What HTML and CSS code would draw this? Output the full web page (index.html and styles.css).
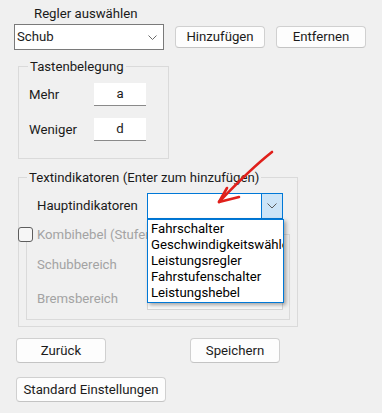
FILE: index.html
```html
<!DOCTYPE html>
<html lang="de">
<head>
<meta charset="utf-8">
<title>Regler</title>
<link rel="stylesheet" href="styles.css">
</head>
<body>
<div class="page">
  <div class="title">Regler auswählen</div>
  <div class="toprow">
    <div class="combo">
      <span class="combo-text">Schub</span>
      <svg class="chev" width="9" height="5" viewBox="0 0 9 5"><path d="M0.5 0.5 L4.5 4.5 L8.5 0.5" fill="none" stroke="#6a6a6a" stroke-width="1"/></svg>
    </div>
    <button class="btn btn-top">Hinzufügen</button>
    <button class="btn btn-top">Entfernen</button>
  </div>

  <fieldset class="grp grp-keys">
    <legend>Tastenbelegung</legend>
    <div class="keyrow"><span class="lbl lbl-key">Mehr</span><span class="keybox">a</span></div>
    <div class="keyrow keyrow-2"><span class="lbl lbl-key">Weniger</span><span class="keybox">d</span></div>
  </fieldset>

  <fieldset class="grp grp-text">
    <legend class="legend-text">Textindikatoren (Enter zum hinzufügen)</legend>
    <div class="hrow">
      <span class="lbl lbl-wide">Hauptindikatoren</span>
      <div class="combo combo-focus">
        <span class="combo-text"></span>
        <span class="dd-btn">
          <svg width="10" height="6" viewBox="0 0 10 6"><path d="M0.5 0.5 L5 5 L9.5 0.5" fill="none" stroke="#5a5a5a" stroke-width="1"/></svg>
        </span>
        <ul class="dd-list">
          <li>Fahrschalter</li>
          <li>Geschwindigkeitswähler</li>
          <li>Leistungsregler</li>
          <li>Fahrstufenschalter</li>
          <li>Leistungshebel</li>
        </ul>
      </div>
    </div>
    <fieldset class="grp grp-inner">
      <legend class="legend-check"><span class="check"></span><span class="dis">Kombihebel (Stufenschalter)</span></legend>
      <div class="irow"><span class="lbl lbl-wide dis">Schubbereich</span><span class="tbox-dis"></span></div>
      <div class="irow"><span class="lbl lbl-wide dis">Bremsbereich</span><span class="tbox-dis"></span></div>
    </fieldset>
  </fieldset>

  <div class="btnrow">
    <button class="btn btn-bottom">Zurück</button>
    <button class="btn btn-bottom btn-save">Speichern</button>
  </div>
  <div class="btnrow btnrow-2">
    <button class="btn btn-std">Standard Einstellungen</button>
  </div>

  <svg class="arrow" width="382" height="413" viewBox="0 0 382 413">
    <path d="M272 152 C 258 163, 238 182, 219 202" fill="none" stroke="#e0201b" stroke-width="2.6" stroke-linecap="round"/>
    <path d="M227 188 L 219 202 L 239 197" fill="none" stroke="#e0201b" stroke-width="2.6" stroke-linecap="round" stroke-linejoin="round"/>
  </svg>
</div>
</body>
</html>
```

FILE: styles.css
```css
* { box-sizing: border-box; }
html, body { margin: 0; padding: 0; background: #f0f0f0; }
body {
  font-family: Roboto, "Noto Sans", "DejaVu Sans", sans-serif;
  font-size: 13.2px;
  line-height: 16px;
  color: #1a1a1a;
  width: 382px;
  height: 413px;
  overflow: hidden;
}
.page { position: relative; height: 413px; }

.title { height: 22px; padding: 6px 0 0 34px; }

.toprow {
  display: flex;
  align-items: center;
  height: 26px;
  margin-top: 2px;
  padding-left: 14px;
}
.combo {
  position: relative;
  display: flex;
  align-items: center;
  width: 150px;
  height: 26px;
  background: #fff;
  border: 1px solid #7a7a7a;
}
.combo-text { padding-left: 2px; flex: 1; }
.chev { margin-right: 6px; margin-top: 1px; }

.btn {
  font: inherit;
  color: #1b1b1b;
  background: #fdfdfd;
  border: 1px solid #d0d0d0;
  border-bottom-color: #c4c4c4;
  border-radius: 4px;
  padding: 0;
  text-align: center;
}
.btn-top { width: 90px; height: 22px; margin-left: 11px; }

.grp {
  margin: 0;
  padding: 0;
  border: 1px solid #dadada;
  min-width: 0;
}
.grp > legend {
  line-height: 15px;
  height: 15px;
  padding: 0 2px;
  margin-left: 9px;
}

.grp-keys {
  margin: 9px 0 0 18px;
  width: 151px;
  padding-bottom: 17px;
}
.keyrow {
  display: flex;
  align-items: center;
  height: 23px;
  margin-top: 9px;
  padding-left: 10px;
}
.keyrow-2 { margin-top: 12px; }
.lbl-key { width: 65px; }
.keybox {
  width: 52px;
  height: 23px;
  background: #fff;
  border-bottom: 1px solid #8a8a8a;
  text-align: center;
  line-height: 22px;
}

.grp-text {
  margin: 11px 0 0 18px;
  width: 280px;
  padding-bottom: 6px;
}
.grp-text > .legend-text { margin-left: 8px; }

.hrow {
  display: flex;
  align-items: center;
  height: 26px;
  margin-top: 8px;
  padding-left: 18px;
}
.lbl-wide { width: 110px; flex: none; }
.combo-focus {
  width: 136px;
  border-color: #0078d7;
}
.dd-btn {
  display: flex;
  align-items: center;
  justify-content: center;
  width: 21px;
  height: 100%;
  background: #cce4f7;
  border-left: 1px solid #0078d7;
}
.dd-list {
  position: absolute;
  z-index: 5;
  top: calc(100% + 1px);
  left: -1px;
  width: 137px;
  margin: 0;
  padding: 1px 0;
  list-style: none;
  background: #fff;
  border: 1px solid #0078d7;
  box-shadow: 2px 2px 4px rgba(0, 0, 0, 0.35);
  color: #000;
}
.dd-list li {
  height: 16px;
  line-height: 16px;
  padding-left: 3px;
  white-space: nowrap;
  overflow: hidden;
}

.grp-inner {
  margin: 8px 7px 0 7px;
  padding-bottom: 9px;
}
.grp-inner > .legend-check {
  display: flex;
  align-items: center;
  margin-left: -9px;
  padding: 0 2px 0 0;
}
.check {
  width: 15px;
  height: 15px;
  margin-right: 4px;
  border: 1px solid #5e5e5e;
  border-radius: 3px;
  background: #f6f6f6;
}
.dis { color: #a3a3a3; }
.irow {
  display: flex;
  align-items: center;
  height: 23px;
  margin-top: 11px;
  padding-left: 10px;
}
.tbox-dis {
  width: 136px;
  height: 23px;
  background: #f9f9f9;
  border: 1px solid #d4d4d4;
}

.btnrow {
  display: flex;
  margin-top: 11px;
  padding-left: 16px;
}
.btnrow-2 { margin-top: 14px; }
.btn-bottom { width: 90px; height: 25px; }
.btn-save { margin-left: 84px; }
.btn-std { width: 150px; height: 25px; }

.arrow {
  position: absolute;
  left: 0;
  top: 0;
  z-index: 10;
  pointer-events: none;
}
```
